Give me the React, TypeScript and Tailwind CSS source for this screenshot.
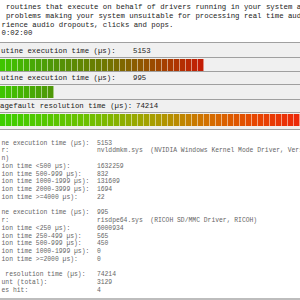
import React from "react";

type RGB = [number, number, number];

function interp(stops: [number, RGB][], t: number): string {
  for (let i = 0; i < stops.length - 1; i++) {
    const [t0, c0] = stops[i];
    const [t1, c1] = stops[i + 1];
    if (t <= t1) {
      const f = Math.max(0, (t - t0) / (t1 - t0));
      return `rgb(${c0.map((v, k) => Math.round(v + (c1[k] - v) * f)).join(",")})`;
    }
  }
  const c = stops[stops.length - 1][1];
  return `rgb(${c.join(",")})`;
}

const stopsA: [number, RGB][] = [
  [0, [62, 200, 0]],
  [0.25, [78, 152, 8]],
  [0.5, [108, 122, 0]],
  [0.7, [145, 85, 0]],
  [0.85, [172, 55, 0]],
  [1, [198, 26, 6]],
];

const stopsB: [number, RGB][] = [
  [0, [58, 206, 0]],
  [0.3, [110, 192, 0]],
  [0.5, [165, 160, 0]],
  [0.7, [212, 110, 0]],
  [0.85, [230, 70, 0]],
  [1, [236, 40, 10]],
];

function Bar({ count, stops, span }: { count: number; stops: [number, RGB][]; span: number }) {
  return (
    <div className="flex h-[12px]">
      {Array.from({ length: count }).map((_, i) => (
        <div
          key={i}
          className="w-[6px] h-full shrink-0 border-r border-white/50"
          style={{ backgroundColor: interp(stops, (i * 6 + 3) / span) }}
        />
      ))}
    </div>
  );
}

const Sep = () => <div className="h-px bg-[#a0a0a0]" />;

const pad = (s: string, n = 25) => s.padEnd(n, " ");

const lower: string[] = [
  pad("ne execution time (µs):") + "5153",
  pad("r:") + "nvlddmkm.sys  (NVIDIA Windows Kernel Mode Driver, Version 368.81, NVIDIA Corporation)",
  "n)",
  pad("ion time <500 µs):") + "1632259",
  pad("ion time 500-999 µs):") + "832",
  pad("ion time 1000-1999 µs):") + "131609",
  pad("ion time 2000-3999 µs):") + "1694",
  pad("ion time >=4000 µs):") + "22",
  " ",
  pad("ne execution time (µs):") + "995",
  pad("r:") + "risdpe64.sys  (RICOH SD/MMC Driver, RICOH)",
  pad("ion time <250 µs):") + "6000934",
  pad("ion time 250-499 µs):") + "565",
  pad("ion time 500-999 µs):") + "450",
  pad("ion time 1000-1999 µs):") + "0",
  pad("ion time >=2000 µs):") + "0",
  " ",
  pad(" resolution time (µs):") + "74214",
  pad("unt (total):") + "3129",
  pad("es hit:") + "4",
];

export default function App() {
  const mono = "font-['Liberation_Mono','Courier_New',monospace]";
  return (
    <div className={`w-[300px] h-[300px] overflow-hidden bg-white flex flex-col ${mono}`}>
      <div className="h-[42px] shrink-0 pt-[3px] pl-[1.5px] text-[7.35px] leading-[8.75px] text-[#222] whitespace-pre overflow-hidden">
        <div>{" routines that execute on behalf of drivers running in your system and can cause"}</div>
        <div>{" problems making your system unsuitable for processing real time audio and other tasks."}</div>
        <div>{"rience audio dropouts, clicks and pops."}</div>
        <div>{"0:02:00"}</div>
      </div>
      <Sep />
      <div className="bg-[#f0f0f0] text-[7.35px] leading-[8px] text-[#1a1a1a] shrink-0">
        <div className="h-[14px] pt-[4px] pl-[1px] flex whitespace-pre">
          <span className="w-[132px] shrink-0">utine execution time (µs):</span>
          <span>5153</span>
        </div>
        <Sep />
        <div className="h-[13px] pt-px">
          <Bar count={34} stops={stopsA} span={204} />
        </div>
        <Sep />
        <div className="h-[12px] pt-[2px] pl-[1px] flex whitespace-pre">
          <span className="w-[132px] shrink-0">utine execution time (µs):</span>
          <span>995</span>
        </div>
        <Sep />
        <div className="h-[14px] pt-px">
          <Bar count={9} stops={stopsA} span={204} />
        </div>
        <Sep />
        <div className="h-[12px] pt-[2px] pl-0 flex whitespace-pre">
          <span className="w-[136px] shrink-0">agefault resolution time (µs):</span>
          <span>74214</span>
        </div>
        <Sep />
        <div className="h-[16px] pt-px">
          <Bar count={50} stops={stopsB} span={300} />
        </div>
        <Sep />
      </div>
      <div className="flex-1 pt-[9.5px] pl-[1.5px] text-[6.37px] leading-[7.75px] text-[#666] whitespace-pre overflow-hidden">
        {lower.map((l, i) => (
          <div key={i}>{l}</div>
        ))}
      </div>
      <div className="h-[2px] shrink-0 bg-[#bdbdbd]" />
    </div>
  );
}
